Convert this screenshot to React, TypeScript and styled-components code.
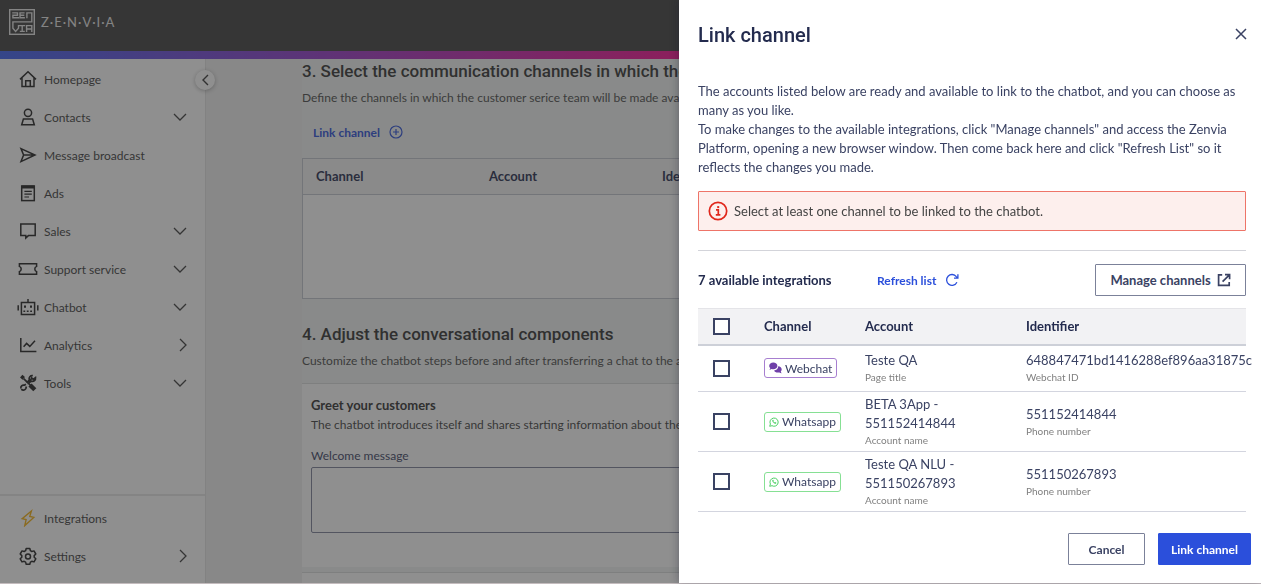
import React from 'react';
import styled, { createGlobalStyle } from 'styled-components';

const ink = '#3a4263';
const inkDark = '#232b4e';
const blue = '#2b4fdb';

const GlobalStyle = createGlobalStyle`
  *, *::before, *::after { box-sizing: border-box; }
  body {
    margin: 0;
    font-family: Lato, 'Open Sans', sans-serif;
    font-size: 13px;
    color: #303030;
  }
  h1, h2, h3, p { margin: 0; }
  button, textarea { font-family: inherit; }
  a { text-decoration: none; color: inherit; }
  svg { display: block; flex: none; }
`;

const Shell = styled.div`
  height: 100vh;
  display: flex;
  flex-direction: column;
  overflow: hidden;
  border-bottom: 1px solid #c4bcbe;
`;

const Header = styled.header`
  height: 51px;
  flex: none;
  padding: 9px 9px 0;
  display: flex;
  align-items: flex-start;
  gap: 6px;
  background: #3d3d3d;
  color: #e6e6e6;
`;

const Wordmark = styled.span`
  font-size: 13px;
  line-height: 26px;
  letter-spacing: 1px;
`;

const Rainbow = styled.div`
  height: 8px;
  flex: none;
  background: linear-gradient(90deg, #3a60f0 0%, #8f3acc 24%, #f80d90 54%, #ff1080 100%);
`;

const Body = styled.div`
  flex: 1;
  min-height: 0;
  display: flex;
`;

const Sidebar = styled.nav`
  position: relative;
  width: 206px;
  flex: none;
  display: flex;
  flex-direction: column;
  justify-content: space-between;
  background: #fff;
  border-right: 1px solid #e2e2e2;
`;

const NavList = styled.ul<{ $bottom?: boolean }>`
  list-style: none;
  margin: 0;
  padding: ${p => (p.$bottom ? '3px 0 8px' : '1px 0 0')};
  border-top: ${p => (p.$bottom ? '2px solid #e6e6e6' : 'none')};
`;

const NavLink = styled.a`
  height: 38px;
  padding: 0 18px 0 16px;
  display: flex;
  align-items: center;
  gap: 4px;
  font-size: 12px;
  color: #3c3c3c;
`;

const NavIcon = styled.span<{ $tint?: string }>`
  width: 24px;
  display: flex;
  justify-content: center;
  color: ${p => p.$tint || '#202020'};
`;

const NavLabel = styled.span`
  flex: 1;
`;

const Collapse = styled.button`
  position: absolute;
  top: 11px;
  right: -10px;
  width: 20px;
  height: 20px;
  padding: 0;
  display: flex;
  align-items: center;
  justify-content: center;
  border: 0;
  border-radius: 50%;
  background: #fff;
  color: #333;
  box-shadow: 0 1px 4px rgba(0, 0, 0, 0.3);
`;

const Main = styled.main`
  flex: 1;
  min-width: 0;
  padding: 0 97px 0 96px;
  background: #efefef;
`;

const Content = styled.div`
  background: #f1f5f3;
  overflow: hidden;
`;

const SectionTitle = styled.h2`
  font-family: Roboto, sans-serif;
  font-size: 17px;
  font-weight: 500;
  line-height: 24px;
  white-space: nowrap;
  color: #303030;
`;

const SectionText = styled.p`
  margin-top: 5px;
  font-size: 12px;
  line-height: 20px;
  white-space: nowrap;
  color: #4a4a4a;
`;

const TextButton = styled.button`
  height: 24px;
  padding: 0;
  display: inline-flex;
  align-items: center;
  gap: 9px;
  border: 0;
  background: none;
  color: ${blue};
  font-size: 12px;
  font-weight: 700;
`;

const LinkRow = styled.div`
  display: flex;
  padding: 12px 11px 14px;
`;

const Linked = styled.div`
  height: 141px;
  margin-bottom: 23px;
  border: 1px solid #c3c7cf;
  background: #fff;
`;

const LinkedTable = styled.table`
  width: 100%;
  table-layout: fixed;
  border-collapse: collapse;
  background: #f4f4f4;
  th {
    width: 173px;
    height: 35px;
    padding: 0 0 0 13px;
    text-align: left;
    font-size: 13px;
    font-weight: 700;
    color: ${inkDark};
    border-bottom: 1px solid #c3c7cf;
  }
  th:last-child { width: auto; }
`;

const Card = styled.section`
  height: 184px;
  margin: 12px 0 5px;
  padding: 11px 9px 0;
  border-top: 1px solid #dadddc;
  background: #fff;
  white-space: nowrap;
  overflow: hidden;
`;

const NextCard = styled(Card)`
  margin: 0;
`;

const CardTitle = styled.h3`
  font-size: 13px;
  line-height: 20px;
  font-weight: 700;
`;

const CardText = styled.p`
  font-size: 12px;
  line-height: 20px;
  color: #3f3f3f;
`;

const FieldLabel = styled.label`
  display: block;
  margin-top: 11px;
  font-size: 12px;
  line-height: 20px;
  color: ${ink};
`;

const Message = styled.textarea`
  display: block;
  width: 100%;
  height: 66px;
  margin-top: 1px;
  border: 1px solid #7c8199;
  border-radius: 2px;
  background: #fff;
  resize: none;
`;

const Scrim = styled.div`
  position: fixed;
  inset: 0 0 1px;
  background: rgba(48, 48, 48, 0.54);
`;

const Drawer = styled.aside`
  position: fixed;
  inset: 0 0 1px auto;
  width: 582px;
  max-width: 100%;
  display: flex;
  flex-direction: column;
  background: #fff;
  color: ${ink};
  box-shadow: -1px 0 8px rgba(20, 24, 48, 0.3);
`;

const DrawerHead = styled.div`
  padding: 21px 12px 0 19px;
  display: flex;
  justify-content: space-between;
  align-items: flex-start;
`;

const DrawerTitle = styled.h1`
  font-family: Roboto, sans-serif;
  font-size: 20px;
  font-weight: 500;
  line-height: 28px;
  color: ${inkDark};
`;

const Close = styled.button`
  width: 16px;
  height: 26px;
  padding: 0;
  display: flex;
  align-items: center;
  justify-content: center;
  border: 0;
  background: none;
  color: ${ink};
`;

const DrawerBody = styled.div`
  padding: 33px 15px 0 19px;
`;

const Intro = styled.p`
  font-size: 13px;
  line-height: 19px;
`;

const Alert = styled.div`
  height: 40px;
  margin: 14px 0 19px;
  padding: 0 9px;
  display: flex;
  align-items: center;
  gap: 6px;
  border: 1px solid #ee7468;
  border-radius: 1px;
  background: #fdefed;
  color: #444;
`;

const Toolbar = styled.div`
  padding: 13px 0 12px;
  display: flex;
  align-items: center;
  border-top: 1px solid #d3d4da;
`;

const Count = styled.span`
  width: 179px;
  font-weight: 700;
  color: ${inkDark};
`;

const BoxButton = styled.button<{ $primary?: boolean; $large?: boolean }>`
  height: 32px;
  padding: 0 12px;
  min-width: ${p => (p.$large ? 151 : 77)}px;
  display: flex;
  align-items: center;
  justify-content: center;
  gap: 6px;
  border: 1px solid ${p => (p.$primary ? blue : '#7b8199')};
  border-radius: 1px;
  background: ${p => (p.$primary ? blue : '#fff')};
  color: ${p => (p.$primary ? '#fff' : ink)};
  font-size: ${p => (p.$large ? 13 : 12)}px;
  font-weight: 700;
  white-space: nowrap;
`;

const Spacer = styled.span`
  flex: 1;
`;

const Channels = styled.table`
  width: 100%;
  table-layout: fixed;
  border-collapse: collapse;
  th, td { padding: 0; text-align: left; vertical-align: middle; }
  th {
    height: 36px;
    background: #f2f2f4;
    border-top: 1px solid #e4e4e8;
    border-bottom: 2px solid #cdd0d8;
    font-weight: 700;
    color: ${inkDark};
  }
  td { border-bottom: 1px solid #d3d5df; white-space: nowrap; }
`;

const Col = styled.col<{ $w?: number }>`
  width: ${p => (p.$w ? p.$w + 'px' : 'auto')};
`;

const Row = styled.tr<{ $tall?: boolean }>`
  height: ${p => (p.$tall ? 60 : 47)}px;
`;

const Check = styled.input`
  appearance: none;
  display: block;
  width: 17px;
  height: 17px;
  margin: 0 0 0 15px;
  border: 2px solid ${ink};
  background: #fff;
`;

const Tag = styled.span<{ $kind: 'web' | 'wa' }>`
  height: 20px;
  padding: 0 4px;
  display: inline-flex;
  align-items: center;
  gap: 3px;
  vertical-align: middle;
  border: 1px solid ${p => (p.$kind === 'web' ? '#a77fd0' : '#86e094')};
  border-radius: 3px;
  font-size: 12px;
`;

const Value = styled.div`
  line-height: 19px;
`;

const Hint = styled.div`
  font-size: 10px;
  line-height: 15px;
  color: #808080;
`;

const Footer = styled.div`
  margin-top: auto;
  padding: 0 10px 18px;
  display: flex;
  justify-content: flex-end;
  gap: 13px;
`;

type SvgProps = { w?: number; h?: number; vb?: string; sw?: number; children: React.ReactNode };
const Svg = ({ w = 18, h = 18, vb, sw = 1.5, children }: SvgProps) => (
  <svg width={w} height={h} viewBox={vb || `0 0 ${w} ${h}`} fill="none" stroke="currentColor" strokeWidth={sw} aria-hidden="true">
    {children}
  </svg>
);

const LogoMark = () => (
  <Svg w={26} h={26} sw={1.4}>
    <rect x="0.7" y="0.7" width="24.6" height="24.6" />
    <path d="M3.200 3.900h5.300v2.300H3.900v2.500h6.300" />
    <path d="M15.600 3.900H11v4.800h4.900M11 6.300h4.300" />
    <path d="M17.900 9.300V3.900h4.900v9H3.900v6.300l2.700 3.300 2.900-3.300v-2.600h3.700v5.800" />
    <path d="M10.800 22.400h5M17.600 23.100v-6.500h5.200v6.500M17.600 20h5.200M13.200 16.600h3" />
  </Svg>
);

const icons: Record<string, React.ReactNode> = {
  home: <Svg><path d="M1 9.4 9 1.8l8 7.6M3 8v8.4h12V8M6.7 16.2v-5.4h4.6v5.4" /></Svg>,
  contacts: <Svg><circle cx="9" cy="4.8" r="3.6" /><path d="M4.4 11h9.2l1.7 5.7H2.7z" /></Svg>,
  send: <Svg><path d="M2 2.6 16 9 2 15.6 4.6 9zM4.6 9H16" /></Svg>,
  ads: (
    <Svg>
      <rect x="2.7" y="2" width="12.6" height="14.6" />
      <path d="M2.7 3h12.6" strokeWidth="3" />
      <path d="M5.4 7.4h7.4M5.4 10.2h7.4M5.4 13h4.6" strokeWidth="1.2" />
    </Svg>
  ),
  sales: <Svg><path d="M1.8 2h14.4v11.6H9.4L6.8 16v-2.4h-5z" /></Svg>,
  ticket: <Svg w={20}><path d="M1.4 3.800h17.200v2.600q-1.800.7-1.800 2.600t1.800 2.600v2.600H1.4v-2.600q1.800-.7 1.800-2.600T1.400 6.400z" /></Svg>,
  bot: (
    <Svg w={22}>
      <path d="M4.400 4.400h13.200v12.200H4.400zM11 4.400V1M1.200 7.200v5.400M20.800 7.200v5.400" />
      <path d="M7 8.600h2M13 8.600h2" strokeWidth="2.200" />
      <path d="M6.400 13.200h9.400" strokeDasharray="1.800 1.600" />
    </Svg>
  ),
  chart: <Svg><path d="M1.800 2v13.600H17.400M4.600 10.800l3-3.400 3.200 3 5.200-5.600" /></Svg>,
  tools: (
    <Svg>
      <path d="M2.200 2.200 4.800 4.400" strokeWidth="3.600" />
      <path d="m4.600 4.600 7 6.800" strokeWidth="1.800" />
      <path d="m11 11 4.800 4.800" strokeWidth="4.400" />
      <path d="M13.800 1.700c-2.400-.4-4.300 1.700-3.500 4.300L7.700 8.600M6.900 10.200 5.500 11.200c-2.300-.5-4.200 1.200-3.500 3.300M2.300 15.200c1.300 1.400 3.500 1.200 4.500-.6l.6-2M10.600 8.300l1.800-1.100c2.500.7 4.400-1.200 4.100-3.600l-2.300 1.800-1.500-1.400z" strokeWidth="1.700" />
    </Svg>
  ),
  bolt: <Svg sw={1.4}><path d="M12.400 2 3.200 9.600l3.900 1L5.800 16.600l9-8.200-4-1z" /></Svg>,
  gear: (
    <Svg>
      <path d="m7.200 1.500h3.600l.6 2.200 1.400.8 2.200-.6 1.800 3.100-1.600 1.600v1.600l1.600 1.600-1.800 3.100-2.200-.6-1.400.8-.6 2.100H7.200l-.6-2.100-1.400-.8-2.200.6-1.800-3.100 1.600-1.600V8.600L1.200 7 3 3.900l2.200.6 1.400-.8z" strokeLinejoin="round" />
      <circle cx="9" cy="9.400" r="2.500" />
    </Svg>
  ),
};

const ChevronDown = () => <Svg w={14} h={8} sw={1.3}><path d="m1 1 6 6 6-6" /></Svg>;
const ChevronRight = () => <Svg w={8} h={14} sw={1.3}><path d="m1 1 6 6-6 6" /></Svg>;

type Item = { icon: string; label: string; arrow?: 'down' | 'right'; tint?: string };
const topItems: Item[] = [
  { icon: 'home', label: 'Homepage' },
  { icon: 'contacts', label: 'Contacts', arrow: 'down' },
  { icon: 'send', label: 'Message broadcast' },
  { icon: 'ads', label: 'Ads' },
  { icon: 'sales', label: 'Sales', arrow: 'down' },
  { icon: 'ticket', label: 'Support service', arrow: 'down' },
  { icon: 'bot', label: 'Chatbot', arrow: 'down' },
  { icon: 'chart', label: 'Analytics', arrow: 'right' },
  { icon: 'tools', label: 'Tools', arrow: 'down' },
];
const bottomItems: Item[] = [
  { icon: 'bolt', label: 'Integrations', tint: '#f5b011' },
  { icon: 'gear', label: 'Settings', arrow: 'right' },
];

const NavItems = ({ items }: { items: Item[] }) => (
  <>
    {items.map(item => (
      <li key={item.label}>
        <NavLink href="#">
          <NavIcon $tint={item.tint}>{icons[item.icon]}</NavIcon>
          <NavLabel>{item.label}</NavLabel>
          {item.arrow === 'down' && <ChevronDown />}
          {item.arrow === 'right' && <ChevronRight />}
        </NavLink>
      </li>
    ))}
  </>
);

const WebchatIcon = () => (
  <svg width="13" height="12" viewBox="0 0 13 12" fill="#6f3fa8" aria-hidden="true">
    <path d="M4.300.600C6.600.600 8.400 2 8.400 3.900S6.600 7.200 4.300 7.200c-.6 0-1.200-.1-1.700-.3-.6.500-1.300.8-2.300.9.500-.5.9-1.200 1-1.800C.6 5.400.2 4.700.2 3.900.2 2 2 .600 4.300.600z" />
    <path d="M9.200 4.200c2 .2 3.500 1.500 3.500 3.200 0 .8-.3 1.500-.9 2 .1.700.5 1.300 1 1.800-1 0-1.800-.4-2.400-.8-.5.200-1 .2-1.600.2-1.700 0-3.200-.9-3.700-2.200 2.400-.2 4.200-1.900 4.100-4.200z" />
  </svg>
);

const WhatsappIcon = () => (
  <Svg w={10} h={10} sw={1}>
    <g stroke="#4fd067">
      <path d="m.7 9.300.7-2.300A4.100 4.100 0 1 1 3 8.700z" />
      <path d="M3.500 3.100c-.5 1.500 1.700 3.900 3.400 3.500l.3-.9-1.200-.6-.5.5c-.6-.3-1-.7-1.200-1.200l.4-.5-.5-1z" fill="#4fd067" strokeWidth="0.3" />
    </g>
  </Svg>
);

type Integration = { kind: 'web' | 'wa'; account: string[]; accountHint: string; id: string; idHint: string };
const integrations: Integration[] = [
  { kind: 'web', account: ['Teste QA'], accountHint: 'Page title', id: '648847471bd1416288ef896aa31875c', idHint: 'Webchat ID' },
  { kind: 'wa', account: ['BETA 3App -', '551152414844'], accountHint: 'Account name', id: '551152414844', idHint: 'Phone number' },
  { kind: 'wa', account: ['Teste QA NLU -', '551150267893'], accountHint: 'Account name', id: '551150267893', idHint: 'Phone number' },
];

export default function App() {
  return (
    <>
      <GlobalStyle />
      <Shell>
        <Header>
          <LogoMark />
          <Wordmark>Z·E·N·V·I·A</Wordmark>
        </Header>
        <Rainbow />
        <Body>
          <Sidebar>
            <NavList><NavItems items={topItems} /></NavList>
            <NavList $bottom><NavItems items={bottomItems} /></NavList>
            <Collapse aria-label="Collapse menu">
              <Svg w={7} h={12} sw={1.4}><path d="M6 1 1 6l5 5" /></Svg>
            </Collapse>
          </Sidebar>
          <Main>
            <Content>
              <SectionTitle>3. Select the communication channels in which the chatbot will work</SectionTitle>
              <SectionText>Define the channels in which the customer serice team will be made available.</SectionText>
              <LinkRow>
                <TextButton>
                  Link channel
                  <Svg w={14} h={14} sw={1.2}><circle cx="7" cy="7" r="6" /><path d="M7 4v6M4 7h6" /></Svg>
                </TextButton>
              </LinkRow>
              <Linked>
                <LinkedTable>
                  <thead>
                    <tr><th>Channel</th><th>Account</th><th>Identifier</th></tr>
                  </thead>
                </LinkedTable>
              </Linked>
              <SectionTitle>4. Adjust the conversational components</SectionTitle>
              <SectionText>Customize the chatbot steps before and after transferring a chat to the agent.</SectionText>
              <Card>
                <CardTitle>Greet your customers</CardTitle>
                <CardText>The chatbot introduces itself and shares starting information about the customer</CardText>
                <FieldLabel htmlFor="welcome">Welcome message</FieldLabel>
                <Message id="welcome" />
              </Card>
              <NextCard />
            </Content>
          </Main>
        </Body>
      </Shell>
      <Scrim />
      <Drawer role="dialog" aria-labelledby="drawer-title">
        <DrawerHead>
          <DrawerTitle id="drawer-title">Link channel</DrawerTitle>
          <Close aria-label="Close">
            <Svg w={12} h={12} sw={1.5}><path d="m1 1 10 10M11 1 1 11" /></Svg>
          </Close>
        </DrawerHead>
        <DrawerBody>
          <Intro>
            The accounts listed below are ready and available to link to the chatbot, and you can choose as<br />
            many as you like.
          </Intro>
          <Intro>
            To make changes to the available integrations, click "Manage channels" and access the Zenvia<br />
            Platform, opening a new browser window. Then come back here and click "Refresh List" so it<br />
            reflects the changes you made.
          </Intro>
          <Alert role="alert">
            <Svg w={20} h={20} sw={1.7}>
              <g stroke="#e0271b">
                <circle cx="10" cy="10" r="8.700" />
                <path d="M8 8.900h2.300v4.700M7.800 13.900h4.600" />
                <path d="M9.200 6.100h2" strokeWidth="2" />
              </g>
            </Svg>
            Select at least one channel to be linked to the chatbot.
          </Alert>
          <Toolbar>
            <Count>7 available integrations</Count>
            <TextButton>
              Refresh list
              <Svg w={14} h={14} sw={1.3}><path d="M11.900 9.200A5.400 5.400 0 1 1 11.300 3.600l1.200 1.300M12.900 1.300v3.900H9" /></Svg>
            </TextButton>
            <Spacer />
            <BoxButton $large>
              Manage channels
              <Svg w={14} h={14} sw={1.7}><path d="M5.200 1.800H1.600v10.600h10.600V9M8 1.600h4.600v4.600M12.400 1.800 5.600 8.600" /></Svg>
            </BoxButton>
          </Toolbar>
          <Channels>
            <colgroup><Col $w={66} /><Col $w={101} /><Col $w={161} /><Col /></colgroup>
            <thead>
              <tr>
                <th><Check type="checkbox" aria-label="Select all integrations" /></th>
                <th>Channel</th>
                <th>Account</th>
                <th>Identifier</th>
              </tr>
            </thead>
            <tbody>
              {integrations.map(it => (
                <Row key={it.account.join()} $tall={it.account.length > 1}>
                  <td><Check type="checkbox" aria-label={`Select ${it.account.join(' ')}`} /></td>
                  <td>
                    <Tag $kind={it.kind}>
                      {it.kind === 'web' ? <WebchatIcon /> : <WhatsappIcon />}
                      {it.kind === 'web' ? 'Webchat' : 'Whatsapp'}
                    </Tag>
                  </td>
                  <td>
                    {it.account.map(line => <Value key={line}>{line}</Value>)}
                    <Hint>{it.accountHint}</Hint>
                  </td>
                  <td>
                    <Value>{it.id}</Value>
                    <Hint>{it.idHint}</Hint>
                  </td>
                </Row>
              ))}
            </tbody>
          </Channels>
        </DrawerBody>
        <Footer>
          <BoxButton>Cancel</BoxButton>
          <BoxButton $primary>Link channel</BoxButton>
        </Footer>
      </Drawer>
    </>
  );
}
